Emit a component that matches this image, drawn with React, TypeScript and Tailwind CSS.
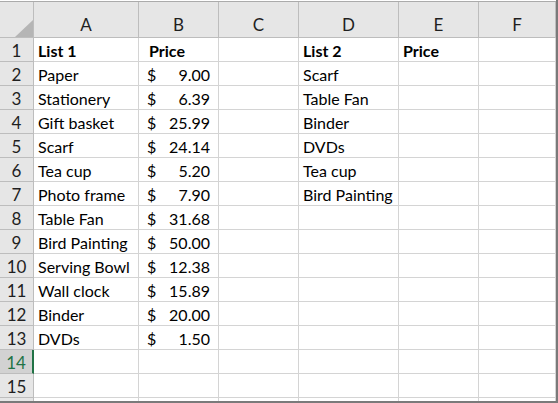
import React from "react";

const colA = ["List 1", "Paper", "Stationery", "Gift basket", "Scarf", "Tea cup", "Photo frame", "Table Fan", "Bird Painting", "Serving Bowl", "Wall clock", "Binder", "DVDs"];
const colB = ["", "9.00", "6.39", "25.99", "24.14", "5.20", "7.90", "31.68", "50.00", "12.38", "15.89", "20.00", "1.50"];
const colD = ["List 2", "Scarf", "Table Fan", "Binder", "DVDs", "Tea cup", "Bird Painting"];

const letters = ["A", "B", "C", "D", "E", "F"];
const rows = Array.from({ length: 16 }, (_, i) => i + 1);

const cell = "h-[24px] border-r border-b border-[#d4d4d4] pt-[5px] leading-[16px] whitespace-nowrap overflow-hidden";

export default function App() {
    return (
        <div
            className="w-[558px] h-[403px] overflow-hidden bg-white border-r-2 border-b-2 border-[#7a7a7a] text-[16px] text-black"
            style={{ fontFamily: "Lato, 'Open Sans', sans-serif" }}
        >
            <div className="h-[2px] border-b border-[#ababab]" />
            <div className="grid grid-cols-[34px_105px_80px_80px_100px_80px_1fr] grid-rows-[36px]">
                {/* header row */}
                <div className="h-[36px] bg-[#e6e6e6] border-r border-b border-[#bdbdbd] relative">
                    <svg className="absolute left-[15px] top-[18px]" width="18" height="17" viewBox="0 0 18 17">
                        <polygon points="18,0 18,17 0,17" fill="#b5b5b5" />
                    </svg>
                </div>
                {letters.map((l) => (
                    <div
                        key={l}
                        className="h-[36px] bg-[#e6e6e6] border-r border-b border-[#bdbdbd] flex items-end justify-center pb-[3px] text-[17px] text-[#1f1f1f] leading-[19px]"
                    >
                        {l}
                    </div>
                ))}

                {rows.map((r) => {
                    const i = r - 1;
                    const selected = r === 14;
                    const a = colA[i] ?? "";
                    const b = colB[i];
                    const d = colD[i] ?? "";
                    const head = i === 0;
                    return (
                        <React.Fragment key={r}>
                            <div
                                className={
                                    selected
                                        ? "h-[24px] bg-[#d2d2d2] border-r-2 border-r-[#217346] border-b border-b-[#bdbdbd] text-center pt-[5px] leading-[16px] text-[17px] text-[#217346]"
                                        : "h-[24px] bg-[#e6e6e6] border-r border-b border-[#bdbdbd] text-center pt-[5px] leading-[16px] text-[17px] text-[#1f1f1f]"
                                }
                            >
                                {r < 16 ? r : ""}
                            </div>
                            <div className={`${cell} pl-[4px] ${head ? "font-bold" : ""}`}>{a}</div>
                            {head ? (
                                <div className={`${cell} pl-[10px] font-bold`}>Price</div>
                            ) : b ? (
                                <div className={`${cell} flex justify-between pl-[8px] pr-[8px]`}>
                                    <span>$</span>
                                    <span>{b}</span>
                                </div>
                            ) : (
                                <div className={cell} />
                            )}
                            <div className={cell} />
                            <div className={`${cell} pl-[4px] ${head ? "font-bold" : ""}`}>{d}</div>
                            <div className={`${cell} pl-[4px] font-bold`}>{head ? "Price" : ""}</div>
                            <div className={cell} />
                        </React.Fragment>
                    );
                })}
            </div>
        </div>
    );
}
